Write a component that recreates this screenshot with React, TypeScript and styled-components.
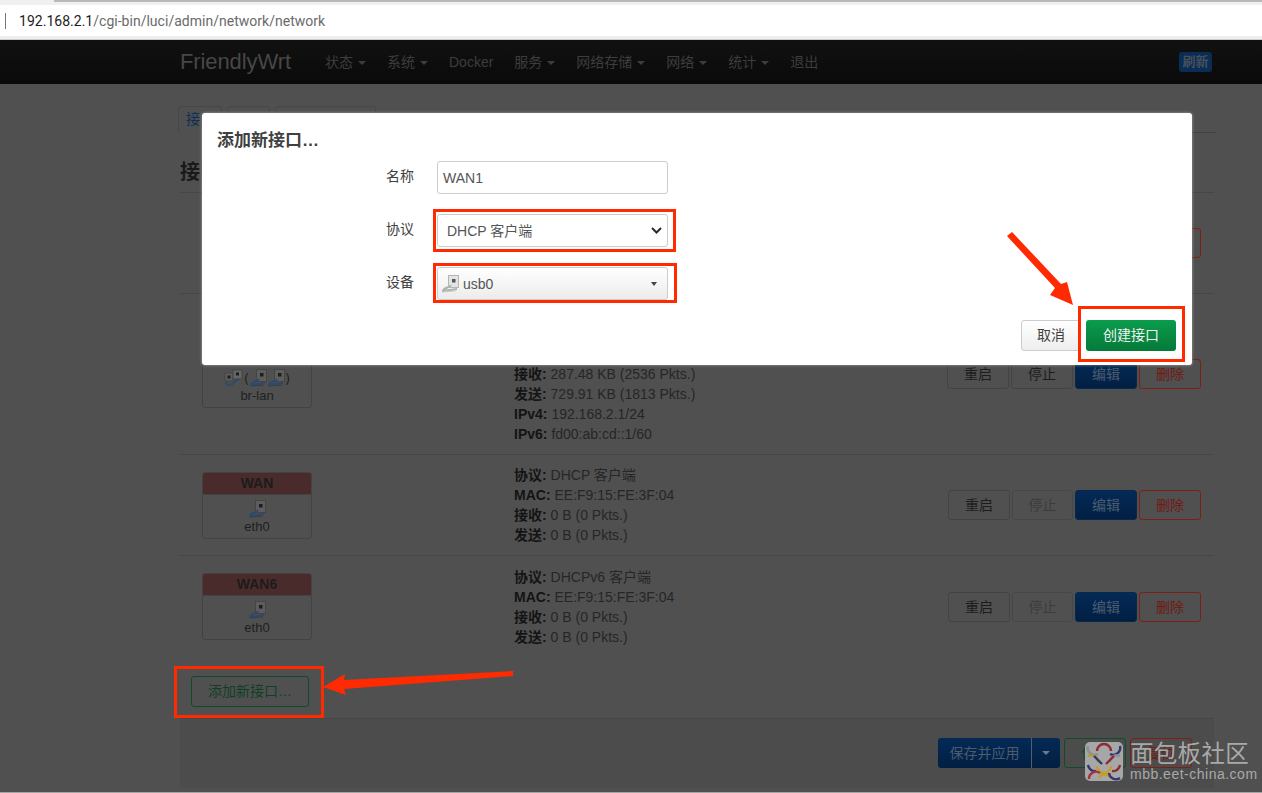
import React from "react";
import styled, { createGlobalStyle } from "styled-components";

const Global = createGlobalStyle`
  html, body { margin: 0; padding: 0; background: #505050; }
  * { box-sizing: border-box; }
  body { font-family: "Liberation Sans", "Noto Sans CJK SC", sans-serif; font-size: 14px; line-height: 20px; color: #1f1f1f; }
`;

const Shot = styled.div`
  position: relative; width: 1262px; height: 793px; overflow: hidden; display: flex; flex-direction: column; background: #505050;
`;
const TopStrip = styled.div`
  height: 5px; background: #f0f0f0; padding-left: 54px;
  &::before { content: ""; display: block; height: 2px; background: #b9b9b9; }
`;
const UrlBar = styled.div`
  height: 31px; background: #fff; display: flex; align-items: center; gap: 13px; padding-left: 5px;
  font-family: "Roboto", "Liberation Sans", sans-serif; font-size: 14px; color: #6a6a6a; letter-spacing: 0.02px;
  b { font-weight: 400; color: #1c1c1c; }
`;
const Caret = styled.i`width: 1px; height: 16px; background: #777; display: block;`;
const UrlGap = styled.div`height: 4px; background: #eee; border-bottom: 1px solid #ccc;`;
const Nav = styled.div`
  height: 44px; flex: none; background: linear-gradient(#111, #0a0a0a); display: flex; align-items: center; padding: 0 50px 0 180px;
`;
const Brand = styled.div`font-size: 22px; color: #474747; width: 145px; letter-spacing: -0.1px;`;
const NavItems = styled.div`display: flex; gap: 21px; flex: 1; color: #3d3d3d;`;
const NavItem = styled.div`display: flex; align-items: center;`;
const NavCaret = styled.i`
  display: block; margin-left: 5px; width: 0; height: 0; border: 4px solid transparent; border-top-color: #3d3d3d; border-bottom: 0; margin-top: 2px;
`;
const Refresh = styled.div`
  width: 33px; height: 20px; border-radius: 3px; background: #0b2c54; color: #46505c; font-size: 13px; font-weight: 700; text-align: center; line-height: 20px;
`;
const Content = styled.div`
  flex: 1; margin: 0 48px 0 180px; padding-top: 22px; display: flex; flex-direction: column; min-height: 0;
`;
const Tabs = styled.div`
  display: flex; gap: 5px; height: 27px; margin-left: -2px; border-bottom: 1px solid #434343; margin-right: -2px;
`;
const Tab = styled.div<{ $w: number; $active?: boolean }>`
  width: ${(p) => p.$w}px; height: 27px; border: 1px solid #474747; border-radius: 3px 3px 0 0; padding-left: 7px; line-height: 24px;
  color: #0e2f55; background: #505050; ${(p) => (p.$active ? "border-bottom-color: #505050;" : "")}
`;
const Heading = styled.h2`
  margin: 0; height: 60px; font-size: 20px; font-weight: 700; line-height: 78px; color: #191919; border-bottom: 1px solid #464646;
`;
const Row = styled.div<{ $h: number }>`
  height: ${(p) => p.$h}px; flex: none; display: flex; align-items: center; padding: 0 13px 0 22px; border-bottom: 1px solid #464646;
`;
const LastRow = styled(Row)`border-bottom: 0;`;
const Card = styled.div`
  width: 110px; height: 67px; flex: none; border: 1px solid #434343; border-radius: 3px; text-align: center; overflow: hidden;
`;
const CardTitle = styled.div`
  height: 22px; background: #4a2b2b; border-bottom: 1px solid #434343; font-weight: 700; color: #1c1c1c; line-height: 21px;
`;
const CardBody = styled.div`
  display: flex; flex-direction: column; align-items: center; padding-top: 5px; font-size: 12px; line-height: 16px; color: #1f1f1f; height: 44px;
  font-size: 13px;
`;
const Icons = styled.div`height: 18px; display: flex; align-items: center; gap: 1px; margin-bottom: 1px;`;
const Details = styled.div`margin-left: 202px; flex: 1; color: #262626; white-space: nowrap;`;
const Line = styled.div`height: 20px; b { color: #141414; }`;
const Actions = styled.div`display: flex; gap: 2px; margin-left: auto;`;
const Btn = styled.div<{ $kind?: "plain" | "off" | "blue" | "red" | "green" }>`
  width: ${(p) => (p.$kind === "off" ? 61 : 62)}px; height: 30px; border-radius: 3px; text-align: center; line-height: 28px; flex: none;
  border: 1px solid ${(p) =>
    p.$kind === "off" ? "#474747" : p.$kind === "blue" ? "#03294f" : p.$kind === "red" ? "#7e1e14" : p.$kind === "green" ? "#0d4f2d" : "#434343"};
  color: ${(p) =>
    p.$kind === "off" ? "#3c3c3c" : p.$kind === "blue" ? "#4a5c70" : p.$kind === "red" ? "#711a12" : p.$kind === "green" ? "#0d4f2d" : "#1c1c1c"};
  background: ${(p) => (p.$kind === "blue" ? "linear-gradient(#042a56, #021f42)" : "transparent")};
`;
const AddBtn = styled.div`
  width: 118px; height: 31px; margin: 19px 0 0 11px; border: 1px solid #0e4a2e; border-radius: 3px; color: #0f4026; text-align: center; line-height: 29px; flex: none;
`;
const Footer = styled.div`
  height: 70px; margin-top: 11px; flex: none; background: #4c4c4c; border-top: 1px solid #464646; display: flex; justify-content: flex-end; align-items: flex-start;
  padding: 19px 22px 0 0; gap: 4px;
`;
const SaveGroup = styled.div`
  width: 122px; height: 30px; border-radius: 3px; background: linear-gradient(#042a56, #021f42); color: #4a5c70; display: flex; align-items: center;
`;
const SaveLabel = styled.div`width: 94px; text-align: center; height: 100%; line-height: 30px; border-right: 1px solid #4f6074;`;
const SaveDrop = styled.i`display: block; margin-left: 10px; width: 0; height: 0; border: 4px solid transparent; border-top-color: #6b7a8a; border-bottom: 0;`;
const BottomEdge = styled.div`position: absolute; left: 0; right: 0; bottom: 0; height: 1px; background: #a5a5a5;`;

const Modal = styled.div`
  position: absolute; left: 202px; top: 113px; width: 990px; height: 252px; background: #fff; border-radius: 3px; box-shadow: 0 0 3px rgba(255,255,255,.5);
  padding: 16px 16px 0 15px; display: flex; flex-direction: column;
`;
const ModalTitle = styled.h4`margin: 0 0 15px; height: 17px; font-size: 17px; line-height: 24px; font-weight: 700; color: #404040;`;
const FormRow = styled.div`display: flex; align-items: center; height: 33px; margin: 0 0 20px 169px; color: #404040;`;
const FormLabel = styled.label`width: 51px; margin-top: -3px;`;
const Field = styled.div<{ $gradient?: boolean }>`
  width: 231px; height: 33px; border: 1px solid #ccc; border-radius: 3px; display: flex; align-items: center; color: #555;
  background: ${(p) => (p.$gradient ? "linear-gradient(#fff, #ececec)" : "#fff")};
`;
const FieldText = styled.span<{ $pad: number }>`margin-left: ${(p) => p.$pad}px; flex: 1;`;
const DropTri = styled.i`display: block; margin-right: 10px; width: 0; height: 0; border: 3px solid transparent; border-top: 4px solid #444; border-bottom: 0;`;
const ModalFooter = styled.div`display: flex; justify-content: flex-end; gap: 5px; margin-top: 0;`;
const Cancel = styled.div`
  width: 60px; height: 31px; border: 1px solid #ccc; border-radius: 3px; background: linear-gradient(#fff, #eee); color: #404040; text-align: center; line-height: 29px;
`;
const Create = styled.div`
  width: 90px; height: 31px; border-radius: 3px; background: linear-gradient(#0b9c4d, #057a39); color: #f2f2f2; text-align: center; line-height: 31px;
`;
const Mark = styled.svg`position: absolute; left: 0; top: 0; pointer-events: none;`;
const Watermark = styled.div`position: absolute; left: 1085px; top: 742px; display: flex; gap: 7px; color: #a9a9a9;`;
const WmText = styled.div`display: flex; flex-direction: column;`;
const WmTitle = styled.div`font-size: 23.5px; line-height: 25px; letter-spacing: 0.3px; white-space: nowrap;`;
const WmUrl = styled.div`font-size: 14px; line-height: 14px; letter-spacing: 0.5px; white-space: nowrap;`;

const Port = ({ light }: { light?: boolean }) => (
  <svg width="17" height="18" viewBox="0 0 17 18">
    <rect x="6.5" y="0.5" width="10" height="12" fill={light ? "#e4e4e4" : "#5d5d5d"} stroke={light ? "#b5b5b5" : "#444"} />
    <rect x="10" y="4" width="3.5" height="3.5" fill={light ? "#555" : "#1d1d1d"} />
    <path d="M9 10 C8 13 2 12 1 16 L15 14" fill="none" stroke={light ? "#a9b4ad" : "#2c4a6b"} strokeWidth="2" />
    <path d="M1 17 L14 16" fill="none" stroke={light ? "#cfcfcf" : "#3a3f46"} strokeWidth="1" />
  </svg>
);
const Bridge = () => (
  <svg width="19" height="18" viewBox="0 0 19 18">
    <rect x="1" y="4" width="8" height="8" fill="#5d5d5d" stroke="#444" />
    <rect x="9" y="1" width="9" height="9" fill="#666" stroke="#444" />
    <rect x="3.5" y="6.5" width="3" height="3" fill="#1d1d1d" />
    <rect x="12" y="3.5" width="3" height="3" fill="#1d1d1d" />
    <path d="M2 13 C2 17 8 17 11 12 L15 10" fill="none" stroke="#2c4a6b" strokeWidth="2" />
  </svg>
);
const Chevron = () => (
  <svg width="11" height="7" viewBox="0 0 11 7" style={{ marginRight: 5 }}>
    <path d="M1 1 L5.5 5.5 L10 1" fill="none" stroke="#2b2b2b" strokeWidth="2" />
  </svg>
);
const Logo = () => (
  <svg width="38" height="39" viewBox="0 0 38 39">
    <rect width="38" height="39" rx="5" fill="#a7a7a7" />
    <g fill="none" strokeWidth="2.4">
      <path d="M12 12 A7 7 0 0 1 26 12" stroke="#8e2b35" transform="translate(0 -3)" />
      <path d="M3 4 A7 7 0 0 0 13 12" stroke="#8b8f97" />
      <path d="M25 12 A7 7 0 0 0 35 4" stroke="#34356e" />
      <path d="M3 14 A7 7 0 0 1 13 20" stroke="#b19a2e" />
      <path d="M25 20 A7 7 0 0 1 35 14" stroke="#8b8f97" />
      <path d="M9 14 L17 22" stroke="#34356e" />
      <path d="M21 22 L29 14" stroke="#8e2b35" />
      <path d="M12 24 A7 7 0 0 0 26 24" stroke="#c39e2a" />
      <path d="M3 23 A7 7 0 0 0 11 29" stroke="#34356e" />
      <path d="M27 29 A7 7 0 0 0 35 23" stroke="#8e2b35" />
      <path d="M4 37 A7 7 0 0 1 15 31" stroke="#a53245" />
      <path d="M14 36 A6 6 0 0 1 25 36" stroke="#c39e2a" />
      <path d="M24 31 A7 7 0 0 0 35 36" stroke="#34356e" />
    </g>
  </svg>
);

const Actionset = ({ off }: { off?: boolean }) => (
  <Actions>
    <Btn>重启</Btn>
    <Btn $kind={off ? "off" : undefined}>停止</Btn>
    <Btn $kind="blue">编辑</Btn>
    <Btn $kind="red">删除</Btn>
  </Actions>
);
const Info = ({ k, v }: { k: string; v: string }) => (
  <Line>
    <b>{k}:</b> {v}
  </Line>
);

const menu = [
  ["状态", true],
  ["系统", true],
  ["Docker", false],
  ["服务", true],
  ["网络存储", true],
  ["网络", true],
  ["统计", true],
  ["退出", false],
] as const;

const Annotations = () => (
  <Mark width="1262" height="793">
    <g fill="none" stroke="#ff2a00" strokeWidth="3">
      <rect x="434.5" y="210.5" width="240" height="40" />
      <rect x="434.5" y="264.5" width="241" height="37" />
      <rect x="1079.5" y="307.5" width="104" height="53" />
      <rect x="175.5" y="667.5" width="147" height="49" />
    </g>
    <g fill="#ff2a00">
      <polygon points="1012,232 1007,236 1055,288 1050,295 1073,305 1067,282 1061,284" />
      <polygon points="323,687 345,674 344,680 513,671 513,676 344,689 346,695" />
    </g>
  </Mark>
);

export default function App() {
  return (
    <Shot>
      <Global />
      <TopStrip />
      <UrlBar>
        <Caret />
        <span>
          <b>192.168.2.1</b>/cgi-bin/luci/admin/network/network
        </span>
      </UrlBar>
      <UrlGap />
      <Nav>
        <Brand>FriendlyWrt</Brand>
        <NavItems>
          {menu.map(([t, c]) => (
            <NavItem key={t}>
              {t}
              {c && <NavCaret />}
            </NavItem>
          ))}
        </NavItems>
        <Refresh>刷新</Refresh>
      </Nav>
      <Content>
        <Tabs>
          <Tab $w={44} $active>接口</Tab>
          <Tab $w={43} />
          <Tab $w={101} />
        </Tabs>
        <Heading>接口</Heading>
        <Row $h={101}>
          <Actionset />
        </Row>
        <Row $h={161}>
          <Card>
            <CardTitle>LAN</CardTitle>
            <CardBody>
              <Icons>
                <Bridge />
                <span>(</span>
                <Port />
                <Port />
                <span>)</span>
              </Icons>
              br-lan
            </CardBody>
          </Card>
          <Details>
            <Info k="协议" v="静态地址" />
            <Info k="运行时间" v="0h 0m 0s" />
            <Info k="MAC" v="EE:F9:15:FE:3F:04" />
            <Info k="接收" v="287.48 KB (2536 Pkts.)" />
            <Info k="发送" v="729.91 KB (1813 Pkts.)" />
            <Info k="IPv4" v="192.168.2.1/24" />
            <Info k="IPv6" v="fd00:ab:cd::1/60" />
          </Details>
          <Actionset />
        </Row>
        <Row $h={101}>
          <Card>
            <CardTitle>WAN</CardTitle>
            <CardBody>
              <Icons><Port /></Icons>
              eth0
            </CardBody>
          </Card>
          <Details>
            <Info k="协议" v="DHCP 客户端" />
            <Info k="MAC" v="EE:F9:15:FE:3F:04" />
            <Info k="接收" v="0 B (0 Pkts.)" />
            <Info k="发送" v="0 B (0 Pkts.)" />
          </Details>
          <Actionset off />
        </Row>
        <LastRow $h={101}>
          <Card>
            <CardTitle>WAN6</CardTitle>
            <CardBody>
              <Icons><Port /></Icons>
              eth0
            </CardBody>
          </Card>
          <Details>
            <Info k="协议" v="DHCPv6 客户端" />
            <Info k="MAC" v="EE:F9:15:FE:3F:04" />
            <Info k="接收" v="0 B (0 Pkts.)" />
            <Info k="发送" v="0 B (0 Pkts.)" />
          </Details>
          <Actionset off />
        </LastRow>
        <AddBtn>添加新接口…</AddBtn>
        <Footer>
          <SaveGroup>
            <SaveLabel>保存并应用</SaveLabel>
            <SaveDrop />
          </SaveGroup>
          <Btn $kind="green">保存</Btn>
          <Btn $kind="red">复位</Btn>
        </Footer>
      </Content>
      <BottomEdge />
      <Modal>
        <ModalTitle>添加新接口…</ModalTitle>
        <FormRow>
          <FormLabel>名称</FormLabel>
          <Field><FieldText $pad={5}>WAN1</FieldText></Field>
        </FormRow>
        <FormRow>
          <FormLabel>协议</FormLabel>
          <Field>
            <FieldText $pad={9}>DHCP 客户端</FieldText>
            <Chevron />
          </Field>
        </FormRow>
        <FormRow>
          <FormLabel>设备</FormLabel>
          <Field $gradient>
            <span style={{ marginLeft: 4, display: "flex" }}><Port light /></span>
            <FieldText $pad={4}>usb0</FieldText>
            <DropTri />
          </Field>
        </FormRow>
        <ModalFooter>
          <Cancel>取消</Cancel>
          <Create>创建接口</Create>
        </ModalFooter>
      </Modal>
      <Annotations />
      <Watermark>
        <Logo />
        <WmText>
          <WmTitle>面包板社区</WmTitle>
          <WmUrl>mbb.eet-china.com</WmUrl>
        </WmText>
      </Watermark>
    </Shot>
  );
}
